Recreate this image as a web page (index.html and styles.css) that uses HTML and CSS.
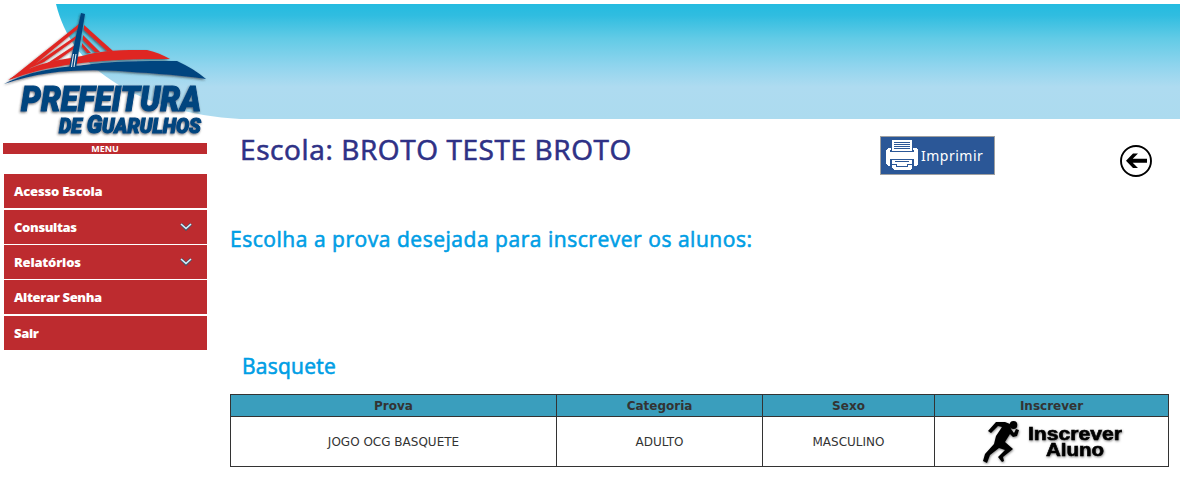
FILE: index.html
```html
<!DOCTYPE html>
<html lang="pt-BR">
<head>
<meta charset="utf-8">
<title>Inscrição de alunos</title>
<link rel="stylesheet" href="styles.css">
</head>
<body>
<header class="banner">
<svg class="banner-art" width="1180" height="143" viewBox="0 0 1180 143">
  <defs>
    <linearGradient id="sky" x1="0" y1="0" x2="0" y2="1">
      <stop offset="0" stop-color="#24bbe0"/><stop offset=".1" stop-color="#30bde0"/><stop offset=".3" stop-color="#62cbe6"/><stop offset=".55" stop-color="#92d5ee"/><stop offset=".72" stop-color="#aedbf0"/><stop offset="1" stop-color="#acdbef"/>
    </linearGradient>
    <filter id="shadow" x="-10%" y="-10%" width="120%" height="130%"><feDropShadow dx="-.7" dy="1.2" stdDeviation=".8" flood-color="#222" flood-opacity=".65"/></filter>
  </defs>
  <path d="M56 4H1180V119H240C190 116 145 103 111 80C82 61 64 36 56 4Z" fill="url(#sky)"/>
  <g filter="url(#shadow)">
    <path d="M79 24V28L22 75L9 80Z M76 36V39L44 62L28 69Z M75 45V48L58 60L46 64Z" fill="#df2724"/>
    <path d="M84 25L113 51H107L84 30Z M83 35L100 52H95L83 40Z M82 43L91 53H87L82 47Z" fill="#df2724"/>
    <path d="M8 80C36 62 60 60 82 56C102 50 123 50 147 50C156 52 163 55 170 59C103 58 50 64 8 80Z" fill="#df2724"/>
    <path d="M4 84C34 69 63 67 84 65C110 61 141 61 177 61C188 66 198 72 206 79C172 74 143 73 119 71C78 69 42 71 4 84Z" fill="#05457f"/>
    <path d="M81 13L85 14L76 68H69Z" fill="#05457f"/><path d="M73.500 54L71.500 67M76 54L74 67" stroke="#e9f1f7" fill="none"/>
    <g class="logo-text"><text x="21" y="111" font-size="35" textLength="180" lengthAdjust="spacingAndGlyphs">PREFEITURA</text>
    <text x="59" y="133" font-size="21" textLength="142" lengthAdjust="spacingAndGlyphs">DE <tspan font-size="25">G</tspan>UARULHOS</text></g>
  </g>
</svg>
</header>
<div class="page">
  <aside class="sidebar">
    <div class="menu-title">MENU</div>
    <nav class="menu">
      <a><span>Acesso Escola</span></a>
      <a class="gap1"><span class="tight">Consultas</span><svg width="12" height="8" viewBox="0 0 12 8"><path d="M1 1L6 6L11 1" stroke="#40586b" stroke-width="3"/><path d="M1 1L6 5.5L11 1" stroke="#d6f0ff" stroke-width="1.6"/></svg></a>
      <a><span>Relatórios</span><svg width="12" height="8" viewBox="0 0 12 8"><path d="M1 1L6 6L11 1" stroke="#40586b" stroke-width="3"/><path d="M1 1L6 5.5L11 1" stroke="#d6f0ff" stroke-width="1.6"/></svg></a>
      <a><span class="tight">Alterar Senha</span></a>
      <a class="gap1"><span class="tight">Sair</span></a>
    </nav>
  </aside>
  <main class="content">
    <div class="topline">
      <h1>Escola: BROTO TESTE BROTO</h1>
      <button class="print"><svg width="32" height="31" viewBox="0 0 32 31" shape-rendering="crispEdges"><path d="M6 0H26V11H6Z" fill="#fff"/><path d="M2 8H5V12H27V8H30L32 10V24L30 26H28V19H4V26H2L0 24V10Z" fill="#fff"/><path d="M4 12H28V17H4Z" fill="#fff"/><path d="M8 2H24V3H8ZM8 4H24V5H8ZM8 6H24V7H8ZM8 8H24V9H8ZM4 10H6V12H4ZM26 10H28V12H26Z" fill="#2b5797"/><path d="M6 20H26V28L24 30H8L6 28Z" fill="#fff"/><path d="M9 21H23V22H9ZM6 24H11V26H21V24H26V25H22V27H10V25H6Z" fill="#2b5797"/></svg><span>Imprimir</span></button>
      <svg class="back" width="32" height="32" viewBox="0 0 32 32"><circle cx="16" cy="16" r="15" fill="#fff" stroke="#000" stroke-width="1.9"/><path d="M6 15.700L13 8.500H18L12.700 13.700H27V17.700H12.700L18 23H13Z"/></svg>
    </div>
    <h2 class="prompt">Escolha a prova desejada para inscrever os alunos:</h2>
    <h2 class="sport">Basquete</h2>
    <table>
      <colgroup><col class="c1"><col class="c2"><col class="c3"><col class="c4"></colgroup>
      <thead><tr><th>Prova</th><th>Categoria</th><th>Sexo</th><th>Inscrever</th></tr></thead>
      <tbody><tr><td>JOGO OCG BASQUETE</td><td>ADULTO</td><td>MASCULINO</td><td>
        <svg class="enroll" width="150" height="48" viewBox="0 0 150 48">
          <defs><filter id="soft"><feDropShadow dx=".5" dy="1" stdDeviation=".8" flood-opacity=".5"/></filter></defs>
          <g filter="url(#soft)"><ellipse cx="37.500" cy="7" rx="3.800" ry="4"/><path d="M34 6L29 4H20L12 13L15 15L22 8L26 9L20 18L18 26L9 36L7 43L11 45L14 37L23 30L29 32L22 39L26 44L28 43L27 39L37 31L29 24L34 16L37 19L41 18L43 12L40 11L38 15L35 11Z"/>
          <text x="52" y="22" textLength="94" lengthAdjust="spacingAndGlyphs">Inscrever</text><text x="70" y="38" textLength="58" lengthAdjust="spacingAndGlyphs">Aluno</text></g>
        </svg></td></tr></tbody>
    </table>
  </main>
</div>
</body>
</html>
```
FILE: styles.css
```css
body { margin: 0; background: #fff; color: #333; font-family: "DejaVu Sans", sans-serif; }
.banner { height: 143px; margin-bottom: -24px; }
.banner-art { display: block; }
.logo-text text { font-family: Roboto, "Liberation Sans", sans-serif; font-weight: 900; font-style: italic; fill: #05457f; stroke: #05457f; stroke-width: 1.1px; }
.page { display: flex; }
.sidebar { width: 207px; padding-top: 24px; }
.menu-title { margin-left: 3px; height: 11px; background: #bd2b2f; color: #fff; text-align: center; font: bold 9px/11px "Open Sans", sans-serif; }
.menu { display: flex; flex-direction: column; gap: 1px; margin: 20px 0 0 4px; }
.menu a { display: flex; justify-content: space-between; height: 34px; line-height: 35px; padding: 0 15px 0 10px; background: #bd2b2f; color: #fff; font-family: "Open Sans", sans-serif; font-size: 13px; font-weight: 800; }
.menu svg { margin-top: 13px; fill: none; }
.menu .gap1 { margin-top: 1px; }
.menu span { letter-spacing: -.2px; }
.menu .tight { letter-spacing: -.35px; }
.content { width: 939px; margin-left: 23px; }
.topline { display: flex; height: 80px; }
h1, h2 { margin: 0; font-family: "Open Sans", sans-serif; font-weight: 500; white-space: nowrap; -webkit-text-stroke: .6px currentColor; }
h1 { width: 640px; margin: 10px 0 0 10px; color: #2e3186; font-size: 28px; line-height: 40px; letter-spacing: .6px; }
.print { display: flex; align-items: center; gap: 3px; box-sizing: border-box; width: 115px; height: 39px; margin-top: 17px; padding: 0 0 0 5px; border: 1px solid #a0a0a0; background: #2b5797; color: #fff; font: 14px "Noto Sans", sans-serif; letter-spacing: .5px; }
.back { margin: 26px 0 0 125px; }
.prompt { margin-top: 25px; color: #009ee5; font-size: 21px; line-height: 30px; letter-spacing: .53px; }
.sport { margin: 97px 0 0 12px; color: #009ee5; font-size: 21px; line-height: 30px; letter-spacing: .25px; }
table { width: 939px; margin-top: 13px; border-collapse: collapse; table-layout: fixed; }
th, td { border: 1px solid #333; padding: 0; text-align: center; font-size: 12px; }
th { height: 21px; background: #3a9ebd; }
td { height: 49px; }
.c1 { width: 326px; } .c2 { width: 206px; } .c3 { width: 172px; } .c4 { width: 234px; }
.enroll { display: block; margin-left: 41px; }
.enroll text { font: bold 18px "Liberation Sans", sans-serif; stroke: #000; stroke-width: .6px; }
```
